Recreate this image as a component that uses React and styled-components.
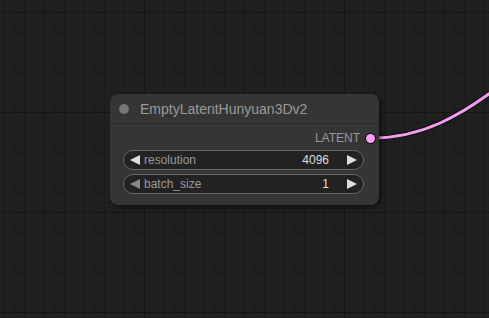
import styled, { createGlobalStyle } from 'styled-components';

const GlobalStyle = createGlobalStyle`
  html, body {
    margin: 0;
    padding: 0;
    background: #202020;
    overflow: hidden;
  }
  * {
    box-sizing: border-box;
  }
`;

const widgets = [
  { name: 'resolution', value: '4096', canDecrease: true },
  { name: 'batch_size', value: '1', canDecrease: false },
];

const App = () => {
  return (
    <Canvas>
      <GlobalStyle />
      <Link viewBox="0 0 489 318" width="489" height="318">
        <path
          d="M 372 138 C 420 138, 460 118, 510 78"
          fill="none"
          stroke="rgba(0,0,0,0.55)"
          strokeWidth="5"
        />
        <path
          d="M 372 138 C 420 138, 460 118, 510 78"
          fill="none"
          stroke="#f29df0"
          strokeWidth="3"
        />
      </Link>
      <Node>
        <Title>
          <TitleDot />
          <TitleText>EmptyLatentHunyuan3Dv2</TitleText>
        </Title>
        <Body>
          <OutputRow>
            <OutputLabel>LATENT</OutputLabel>
            <OutputSlot />
          </OutputRow>
          {widgets.map((w) => (
            <Widget key={w.name}>
              <Arrow dir="left" dim={!w.canDecrease} />
              <WidgetLabel>{w.name}</WidgetLabel>
              <WidgetValue>{w.value}</WidgetValue>
              <Arrow dir="right" />
            </Widget>
          ))}
        </Body>
      </Node>
    </Canvas>
  );
};

export default App;

const Canvas = styled.div`
  position: relative;
  width: 489px;
  height: 318px;
  overflow: hidden;
  background-color: #202020;
  background-image: linear-gradient(to right, #151515 1px, transparent 1px),
    linear-gradient(to bottom, #151515 1px, transparent 1px),
    linear-gradient(to right, #1a1a1a 1px, transparent 1px),
    linear-gradient(to bottom, #1a1a1a 1px, transparent 1px);
  background-size: 100px 100px, 100px 100px, 10px 10px, 10px 10px;
  background-position: 44px 12px, 44px 12px, 4px 2px, 4px 2px;
  font-family: Arial, 'Liberation Sans', sans-serif;
`;

const Link = styled.svg`
  position: absolute;
  left: 0;
  top: 0;
`;

const Node = styled.div`
  position: absolute;
  left: 110px;
  top: 94px;
  width: 269px;
  height: 111px;
  background: #353535;
  border-radius: 8px;
  box-shadow: 2px 2px 4px rgba(0, 0, 0, 0.55);
  display: flex;
  flex-direction: column;
`;

const Title = styled.div`
  height: 30px;
  display: flex;
  align-items: center;
  gap: 11px;
  padding-left: 9px;
  border-bottom: 1px solid #2a2a2a;
`;

const TitleDot = styled.span`
  width: 10px;
  height: 10px;
  border-radius: 50%;
  background: #777;
`;

const TitleText = styled.span`
  font-size: 14px;
  color: #9a9a9a;
  line-height: 1;
`;

const Body = styled.div`
  display: flex;
  flex-direction: column;
  gap: 4px;
  padding: 0 15px 0 13px;
`;

const OutputRow = styled.div`
  height: 22px;
  display: flex;
  align-items: center;
  justify-content: flex-end;
  gap: 6px;
  margin-right: -11px;
  padding-top: 6px;
`;

const OutputLabel = styled.span`
  font-size: 12px;
  color: #999;
`;

const OutputSlot = styled.span`
  width: 9px;
  height: 9px;
  border-radius: 50%;
  background: #ff9cf9;
  box-shadow: 0 0 0 1px #111;
`;

const Widget = styled.div`
  height: 20px;
  border: 1px solid #666;
  border-radius: 10px;
  background: #222;
  display: flex;
  align-items: center;
  padding: 0 6px;
  font-size: 12px;
`;

const Arrow = styled.span`
  width: 0;
  height: 0;
  border-top: 5px solid transparent;
  border-bottom: 5px solid transparent;
  ${(props) =>
    props.dir === 'left'
      ? `border-right: 10px solid ${props.dim ? '#888' : '#ddd'}; margin-right: 4px;`
      : `border-left: 10px solid #ddd; margin-left: 18px;`}
`;

const WidgetLabel = styled.span`
  color: #999;
  flex: 1;
`;

const WidgetValue = styled.span`
  color: #ddd;
`;
